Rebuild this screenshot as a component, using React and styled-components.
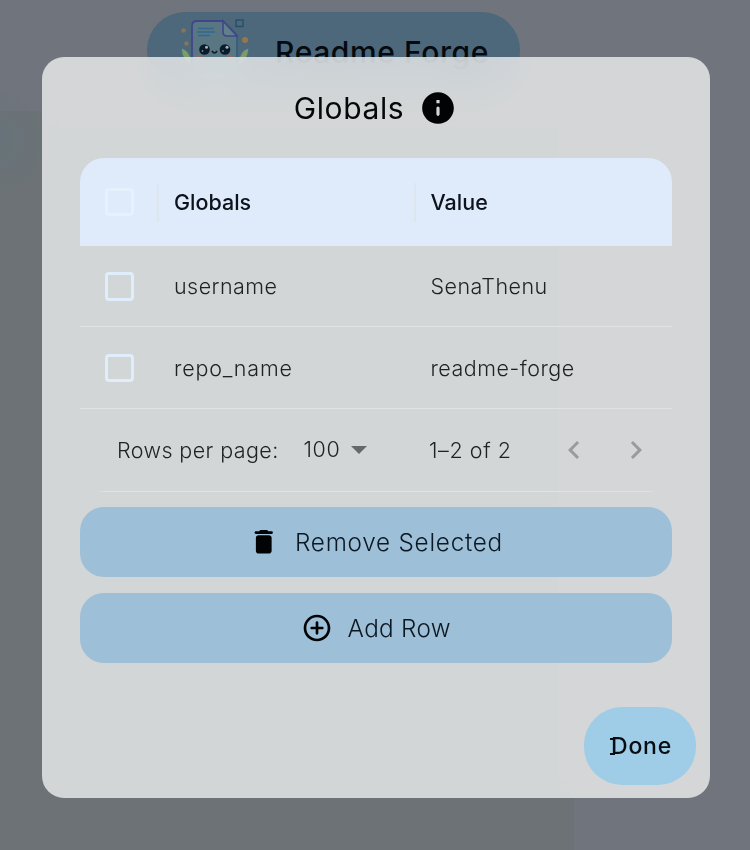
import React from 'react';
import styled, { createGlobalStyle } from 'styled-components';

const GlobalStyle = createGlobalStyle`
  *, *::before, *::after { box-sizing: border-box; }
  body {
    margin: 0;
    height: 850px;
    overflow: hidden;
    font-family: Inter, "Liberation Sans", sans-serif;
    background:
      radial-gradient(ellipse 45px 50px at 0 140px, rgba(98, 117, 126, 0.5), transparent),
      linear-gradient(to right, #6c7276 0, #6c7276 574px, transparent 574px) 0 111px no-repeat,
      #70747c;
  }
`;

const Page = styled.div`
  display: flex;
  justify-content: center;
  padding: 12px 83px 0 0;
`;

const Brand = styled.header`
  display: flex;
  align-items: flex-start;
  width: 373px;
  height: 77px;
  padding: 6px 0 0 33px;
  border-radius: 38px;
  background: #4c687a;
`;

const BrandName = styled.h1`
  margin: 16px 0 0 25px;
  font-size: 30px;
  line-height: 36px;
  font-weight: 500;
  letter-spacing: 0.6px;
  white-space: nowrap;
  color: #050a10;
`;

const Overlay = styled.div`
  position: fixed;
  inset: 0;
  display: flex;
  align-items: flex-start;
  padding: 57px 0 0 41.5px;
`;

const Dialog = styled.section`
  display: flex;
  flex-direction: column;
  width: 668px;
  height: 741px;
  padding: 32px 13.5px 13px 38.5px;
  border-radius: 22px;
  background: rgba(237, 239, 239, 0.8);
  backdrop-filter: blur(14px);
`;

const TitleRow = styled.div`
  display: flex;
  align-items: center;
  justify-content: center;
  gap: 15px;
  height: 38px;
  margin: 0 25px 30.5px 0;
`;

const Title = styled.h2`
  margin: 0;
  font-size: 30px;
  line-height: 38px;
  font-weight: 400;
  letter-spacing: 0.6px;
  color: #050708;
`;

const Table = styled.div`
  width: 591.5px;
  height: 334px;
  overflow: hidden;
  border-radius: 24px;
`;

const Row = styled.div`
  display: grid;
  grid-template-columns: 94px 256.5px 1fr;
  align-items: center;
  height: ${(p) => (p.$head ? 88 : 81.5)}px;
  background: ${(p) => (p.$head ? '#dfeafa' : 'transparent')};
  border-bottom: ${(p) => (p.$head ? '0' : '1px solid #e0e2e4')};
`;

const CheckCell = styled.div`
  display: flex;
  align-items: center;
  justify-content: space-between;
  padding: 1px 15px 0 25px;
`;

const Checkbox = styled.span`
  width: 28.5px;
  height: 28.5px;
  border: 3px solid ${(p) => (p.$head ? '#e5f1fc' : '#dfeefa')};
  border-radius: 4px;
`;

const Separator = styled.span`
  width: 2px;
  height: 39px;
  background: #dde6f0;
`;

const Cell = styled.div`
  display: flex;
  align-items: center;
  justify-content: space-between;
  padding: 1px 15px 0 0;
  font-size: 21.5px;
  line-height: 28px;
  font-weight: ${(p) => (p.$head ? 500 : 350)};
  letter-spacing: ${(p) => p.$spacing || 0}px;
  color: ${(p) => (p.$head ? '#0b131c' : '#1f2224')};
`;

const Footer = styled.div`
  display: flex;
  align-items: center;
  height: 83px;
  padding-left: 37px;
  border-bottom: 1px solid #e0e2e4;
  font-size: 21.5px;
  line-height: 28px;
  font-weight: 350;
  color: #1f2224;
`;

const PageLabel = styled.span`
  width: 186.5px;
  letter-spacing: 0.4px;
`;

const PageSize = styled.span`
  display: flex;
  align-items: center;
  width: 125.5px;
  margin-top: -2px;
  letter-spacing: 0.6px;
`;

const Arrow = styled.svg`
  width: 16px;
  height: 8px;
  margin: 3px 0 0 11px;
  fill: #66696a;
`;

const PageRange = styled.span`
  width: 126.500px;
  letter-spacing: 0.6px;
`;

const Icon = styled.svg`
  flex: none;
  width: ${(p) => p.$size}px;
  height: ${(p) => p.$size}px;
  fill: ${(p) => p.$color || '#020304'};
`;

const Pager = styled.div`
  display: flex;
  gap: 26px;
`;

const Actions = styled.div`
  display: flex;
  flex-direction: column;
  gap: 16px;
  margin-top: 15.5px;
`;

const ActionButton = styled.button`
  display: flex;
  align-items: center;
  justify-content: center;
  gap: 15px;
  width: 591.5px;
  height: 70px;
  padding: 0;
  border: 0;
  border-radius: 24px;
  background: #9ebfd8;
  font: 350 24.3px/30px Inter, "Liberation Sans", sans-serif;
  letter-spacing: ${(p) => p.$spacing}px;
  color: #0c1822;
`;

const DoneButton = styled.button`
  align-self: flex-end;
  width: 112px;
  height: 78px;
  margin-top: auto;
  padding: 0 0 0 3px;
  border: 0;
  border-radius: 38px;
  background: #9fcce6;
  font: 500 23px/30px Inter, "Liberation Sans", sans-serif;
  letter-spacing: 0.8px;
  color: #060d13;
`;

const Initial = styled.span`
  position: relative;
  &::before {
    content: "";
    position: absolute;
    left: -1px;
    top: 5.5px;
    width: 5px;
    height: 17px;
    background:
      linear-gradient(#060d13, #060d13) top / 100% 2px no-repeat,
      linear-gradient(#060d13, #060d13) bottom / 100% 2px no-repeat;
  }
`;

const MascotArt = styled.svg`
  flex: none;
  width: 70px;
  height: 70px;
`;

function Mascot() {
  return (
    <MascotArt viewBox="180 18 70 70" fill="none">
      <path d="M181 48q10 2 11 18-10-4-11-18zM249 48q-10 2-11 18 10-4 11-18z" fill="#7f9a68" stroke="#456f86" strokeWidth="1.2" />
      <path d="M192 84V26q0-5 5-5h26l14 15v48z" fill="#587783" />
      <path d="M192 84V26q0-5 5-5h26" stroke="#40468a" strokeWidth="1.8" />
      <path d="M223 21l14 14v49" stroke="#326080" strokeWidth="1.8" />
      <path d="M223 21v11q0 4 4 4h10z" fill="#637f8c" stroke="#40468a" strokeWidth="1.6" />
      <path d="M198 28.5h16M197 32h18M198 35.5h12" stroke="#32688f" strokeWidth="1.3" />
      <rect x="236" y="20" width="7" height="6.5" stroke="#294f68" strokeWidth="1.5" />
      <circle cx="183.5" cy="30.5" r="2.2" fill="#897555" />
      <circle cx="186.5" cy="43.5" r="2.2" fill="#897555" />
      <circle cx="245" cy="40" r="3" fill="#97764b" />
      <circle cx="204.5" cy="49.5" r="5.3" fill="#0c1b29" />
      <circle cx="225" cy="49.5" r="5.3" fill="#0c1b29" />
      <circle cx="206.5" cy="47.2" r="1.5" fill="#9fb3bb" />
      <circle cx="227" cy="47.2" r="1.5" fill="#9fb3bb" />
      <circle cx="202.5" cy="51" r=".8" fill="#9fb3bb" />
      <circle cx="223" cy="51" r=".8" fill="#9fb3bb" />
      <path d="M212 51q2.500 4 5 0" stroke="#0c1b29" strokeWidth="1.6" />
      <ellipse cx="199" cy="57" rx="3.5" ry="2" fill="#8b6870" />
      <ellipse cx="230" cy="57" rx="3.5" ry="2" fill="#8b6870" />
    </MascotArt>
  );
}

const paths = {
  info: 'M12 2C6.48 2 2 6.48 2 12s4.48 10 10 10 10-4.48 10-10S17.52 2 12 2zm0 15c-.55 0-1-.45-1-1v-4c0-.55.45-1 1-1s1 .45 1 1v4c0 .55-.45 1-1 1zm1-8h-2V7h2v2z',
  trash: 'M6 19c0 1.1.9 2 2 2h8c1.1 0 2-.9 2-2V9c0-1.1-.9-2-2-2H8c-1.1 0-2 .9-2 2v10zM18 4h-2.5l-.71-.71c-.18-.18-.44-.29-.7-.29H9.91c-.26 0-.52.11-.7.29L8.5 4H6c-.55 0-1 .45-1 1s.45 1 1 1h12c.55 0 1-.45 1-1s-.45-1-1-1z',
  plus: 'M12 7c-.55 0-1 .45-1 1v3H8c-.55 0-1 .45-1 1s.45 1 1 1h3v3c0 .55.45 1 1 1s1-.45 1-1v-3h3c.55 0 1-.45 1-1s-.45-1-1-1h-3V8c0-.55-.45-1-1-1zm0-5C6.48 2 2 6.48 2 12s4.48 10 10 10 10-4.48 10-10S17.52 2 12 2zm0 18c-4.41 0-8-3.59-8-8s3.59-8 8-8 8 3.59 8 8-3.59 8-8 8z',
  left: 'M15.41 7.41 14 6l-6 6 6 6 1.41-1.41L10.83 12z',
  right: 'M10 6 8.59 7.41 13.17 12l-4.58 4.59L10 18l6-6z',
};

function Glyph({ name, size, color }) {
  return (
    <Icon viewBox="0 0 24 24" $size={size} $color={color}>
      <path d={paths[name]} />
    </Icon>
  );
}

const rows = [
  { name: 'username', value: 'SenaThenu', ns: 0.45, vs: 0.45 },
  { name: 'repo_name', value: 'readme-forge', ns: 0.8, vs: 0.5 },
];

export default function App() {
  return (
    <>
      <GlobalStyle />
      <Page>
        <Brand>
          <Mascot />
          <BrandName>Readme Forge</BrandName>
        </Brand>
      </Page>
      <Overlay>
        <Dialog>
          <TitleRow>
            <Title>Globals</Title>
            <Glyph name="info" size={38} />
          </TitleRow>
          <Table>
            <Row $head>
              <CheckCell>
                <Checkbox $head />
                <Separator />
              </CheckCell>
              <Cell $head>
                Globals
                <Separator />
              </Cell>
              <Cell $head>Value</Cell>
            </Row>
            {rows.map((row) => (
              <Row key={row.name}>
                <CheckCell>
                  <Checkbox />
                </CheckCell>
                <Cell $spacing={row.ns}>{row.name}</Cell>
                <Cell $spacing={row.vs}>{row.value}</Cell>
              </Row>
            ))}
            <Footer>
              <PageLabel>Rows per page:</PageLabel>
              <PageSize>
                100
                <Arrow viewBox="0 0 16 8">
                  <path d="M0 0h16L8 8z" />
                </Arrow>
              </PageSize>
              <PageRange>1–2 of 2</PageRange>
              <Pager>
                <Glyph name="left" size={36} color="#999c9e" />
                <Glyph name="right" size={36} color="#999c9e" />
              </Pager>
            </Footer>
          </Table>
          <Actions>
            <ActionButton $spacing={0.75}>
              <Glyph name="trash" size={31.5} />
              Remove Selected
            </ActionButton>
            <ActionButton $spacing={0.3}>
              <Glyph name="plus" size={32} />
              Add Row
            </ActionButton>
          </Actions>
          <DoneButton>
            <Initial>D</Initial>one
          </DoneButton>
        </Dialog>
      </Overlay>
    </>
  );
}
